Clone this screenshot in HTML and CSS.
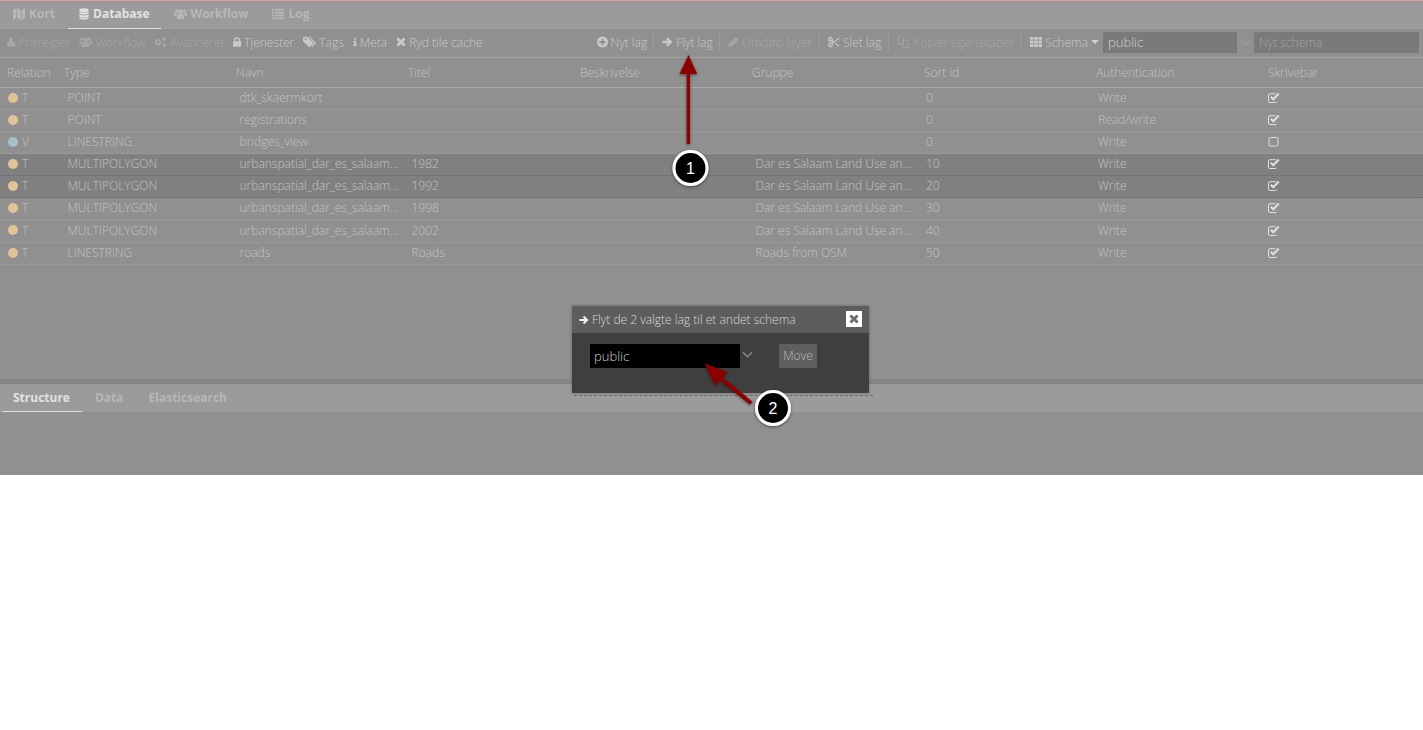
FILE: index.html
```html
<!DOCTYPE html>
<html lang="en">
<head>
  <meta charset="UTF-8" />
  <meta name="viewport" content="width=device-width, initial-scale=1.0"/>
  <title>Database</title>
  <link rel="stylesheet" href="styles.css">
</head>
<body>
  <svg class="sprite" width="0" height="0">
    <symbol id="i-map" viewBox="0 0 12 12" preserveAspectRatio="none"><path d="M0 2.200 3.300 0v9.800L0 12zM4.200 0l3.600 2.200V12L4.200 9.800zM8.700 2.200 12 0v9.800L8.700 12z"/></symbol>
    <symbol id="i-db" viewBox="0 0 14 16"><ellipse cx="7" cy="2.700" rx="6.500" ry="2.700"/><path d="M.5 4.500C2 6.700 12 6.700 13.500 4.500V7C12 9.300 2 9.300 .5 7zM.5 8.500C2 10.700 12 10.700 13.500 8.500V11C12 13.300 2 13.300 .5 11zM.5 12.300C2 14.300 12 14.300 13.500 12.300V13.500C12 16.500 2 16.500 .5 13.500z"/></symbol>
    <symbol id="i-users" viewBox="0 0 18 14"><circle cx="9" cy="4" r="3.400"/><circle cx="3.500" cy="3" r="2.300"/><circle cx="14.500" cy="3" r="2.300"/><path d="M4 13V10c0-2 1.500-3 2.500-3h5c1 0 2.500 1 2.500 3v3c0 .6-.5 1-1 1H5c-.5 0-1-.4-1-1zM0 9V7.500C0 6 1 5.500 2 5.500h2.500C3.500 6.500 3 8 3 10H1c-.5 0-1-.4-1-1zM18 9V7.500c0-1.500-1-2-2-2h-2.500c1 1 1.500 2.500 1.500 4.500h2c.5 0 1-.4 1-1z"/></symbol>
    <symbol id="i-list" viewBox="0 0 14 12"><path d="M0 0h2.500v2H0zM3.500 0H14v2H3.500zM0 3.300h2.500v2H0zM3.500 3.300H14v2H3.500zM0 6.600h2.500v2H0zM3.500 6.600H14v2H3.500zM0 10h2.500v2H0zM3.500 10H14v2H3.500z"/></symbol>
    <symbol id="i-user" viewBox="0 0 10 12"><circle cx="5" cy="3" r="2.900"/><path d="M0 10V8c0-1.500 1-2.500 2-2.500h6c1 0 2 1 2 2.500v2c0 1.200-.8 2-2 2H2c-1.200 0-2-.8-2-2z"/></symbol>
    <symbol id="i-cogs" viewBox="0 0 16 14"><path fill-rule="evenodd" d="M5 3l1 1.200 1.500-.2.500 1.500 1.200.8-.6 1.400.6 1.400-1.200.8-.5 1.500-1.500-.2L5 11.400 4 10.200l-1.500.2-.5-1.500L.8 8.100l.6-1.400L.8 5.300 2 4.500l.5-1.500 1.500.2zM5 5.500a1.700 1.700 0 1 0 .01 0z"/><circle cx="12.500" cy="3" r="2.500"/><circle cx="12.500" cy="11" r="2.500"/></symbol>
    <symbol id="i-lock" viewBox="0 0 10 12"><path fill-rule="evenodd" d="M1 5V3.500a4 3.500 0 0 1 8 0V5h.2c.5 0 .8.300.8.800v5.400c0 .5-.3.800-.8.800H.8c-.5 0-.8-.3-.8-.8V5.800C0 5.300.3 5 .8 5zM2.800 5h4.400V3.500a2.200 2 0 0 0-4.400 0z"/></symbol>
    <symbol id="i-tags" viewBox="0 0 15 12"><path fill-rule="evenodd" d="M0 1c0-.6.400-1 1-1h4l6.500 6.500c.4.400.4 1 0 1.400L8 11.500c-.4.400-1 .4-1.400 0L0 5zM2.800 1.800a1 1 0 1 0 .01 0z"/><path d="M6.500 0h1.500l6.500 6.500c.4.400.4 1 0 1.400L11 11.500c-.4.400-1 .4-1.300 0L13 7.200z"/></symbol>
    <symbol id="i-info" viewBox="0 0 6 12"><path d="M1.500 0h3v2.500h-3zM0 4h4.500v6H6v2H0v-2h1.500V6H0z"/></symbol>
    <symbol id="i-x" viewBox="0 0 12 12"><path d="M3 .5 6 3.500 9 .5 11.500 3 8.500 6l3 3L9 11.500l-3-3-3 3L.5 9l3-3-3-3z"/></symbol>
    <symbol id="i-plus" viewBox="0 0 12 12"><path fill-rule="evenodd" d="M6 0a6 6 0 1 1-.01 0zM5 2.500V5H2.500v2H5v2.500h2V7h2.500V5H7V2.500z"/></symbol>
    <symbol id="i-right" viewBox="0 0 12 12"><path d="M6.300.8 11.500 6l-5.200 5.200-1.800-1.800 2.200-2.100H.5V4.700h6.200L4.500 2.600z"/></symbol>
    <symbol id="i-pencil" viewBox="0 0 12 12"><path d="M8.500.5 11.500 3.500 4 11 0 12l1-4z"/></symbol>
    <symbol id="i-cut" viewBox="0 0 14 12"><path fill-rule="evenodd" d="M2.800 0a2.800 2.800 0 0 1 2.500 4L7 5l5-3.800h2L5.300 8A2.800 2.800 0 1 1 4.400 7L5.400 6 4.400 5A2.800 2.800 0 1 1 2.800 0zM2.800 1.500a1.300 1.300 0 1 0 .01 0zM2.800 8a1.300 1.300 0 1 0 .01 0zM9 7.200l5 3.600h-2L7.800 8z"/></symbol>
    <symbol id="i-copy" viewBox="0 0 14 14"><path fill="none" stroke="currentColor" d="M1 1.500h4l2 2v6H1zM6 4.500h4l3 3v6H6z"/></symbol>
    <symbol id="i-grid" viewBox="0 0 13 11"><path d="M0 0h3.700v3H0zM4.600 0h3.800v3H4.600zM9.300 0H13v3H9.300zM0 4h3.700v3H0zM4.600 4h3.800v3H4.600zM9.300 4H13v3H9.300zM0 8h3.700v3H0zM4.600 8h3.800v3H4.600zM9.300 8H13v3H9.300z"/></symbol>
    <symbol id="i-check" viewBox="0 0 12 11"><path fill="none" stroke="currentColor" d="M8.500 9.500v.2a.8.8 0 0 1-.8.8H1.800a1.300 1.300 0 0 1-1.300-1.300V3a1.300 1.300 0 0 1 1.300-1.300h6"/><path fill="none" stroke="currentColor" stroke-width="2" d="M2.800 4.800 5.300 7.300 10.800 1.500"/></symbol>
    <symbol id="i-box" viewBox="0 0 11 11"><rect x=".5" y="1.500" width="9" height="8.500" rx="1.500" fill="none" stroke="currentColor"/></symbol>
  </svg>

  <div class="app">
    <nav class="tabs main-tabs">
      <a class="tab"><svg class="ico w12"><use href="#i-map"/></svg>Kort</a>
      <a class="tab active"><svg class="ico w10"><use href="#i-db"/></svg>Database</a>
      <a class="tab"><svg class="ico w13"><use href="#i-users"/></svg>Workflow</a>
      <a class="tab"><svg class="ico w12"><use href="#i-list"/></svg>Log</a>
    </nav>

    <div class="toolbar">
      <span class="tool off"><svg class="ico w8"><use href="#i-user"/></svg>Privilegier</span>
      <span class="tool off"><svg class="ico w13"><use href="#i-users"/></svg>Workflow</span>
      <span class="tool off"><svg class="ico w13"><use href="#i-cogs"/></svg>Avanceret</span>
      <span class="tool"><svg class="ico w8"><use href="#i-lock"/></svg>Tjenester</span>
      <span class="tool"><svg class="ico w13"><use href="#i-tags"/></svg>Tags</span>
      <span class="tool"><svg class="ico w4"><use href="#i-info"/></svg>Meta</span>
      <span class="tool"><svg class="ico w10"><use href="#i-x"/></svg>Ryd tile cache</span>

      <div class="tool-right">
        <span class="tool sep"><svg class="ico w11"><use href="#i-plus"/></svg>Nyt lag</span>
        <span class="tool sep"><svg class="ico w11"><use href="#i-right"/></svg>Flyt lag</span>
        <span class="tool sep off roomy"><svg class="ico w11"><use href="#i-pencil"/></svg>Omdøb layer</span>
        <span class="tool sep roomy"><svg class="ico w12"><use href="#i-cut"/></svg>Slet lag</span>
        <span class="tool sep off"><svg class="ico w13"><use href="#i-copy"/></svg>Kopier egenskaber</span>
        <span class="tool schema"><svg class="ico w12"><use href="#i-grid"/></svg>Schema<i class="caret"></i></span>
        <span class="field schema-field">public</span>
        <svg class="chev" viewBox="0 0 12 7"><path d="M1 1l5 5 5-5" fill="none" stroke="currentColor"/></svg>
        <span class="field new-schema">Nyt schema</span>
      </div>
    </div>

    <div class="grid">
      <div class="row head">
        <span>Relation</span><span>Type</span><span>Navn</span><span>Titel</span><span>Beskrivelse</span><span>Gruppe</span><span>Sort id</span><span>Authentication</span><span>Skrivebar</span>
      </div>
      <div class="row">
        <span class="rel"><i class="dot"></i>T</span><span>POINT</span><span>dtk_skaermkort</span><span></span><span></span><span></span><span>0</span><span>Write</span><span><svg class="chk"><use href="#i-check"/></svg></span>
      </div>
      <div class="row">
        <span class="rel"><i class="dot"></i>T</span><span>POINT</span><span>registrations</span><span></span><span></span><span></span><span>0</span><span>Read/write</span><span><svg class="chk"><use href="#i-check"/></svg></span>
      </div>
      <div class="row">
        <span class="rel"><i class="dot view"></i>V</span><span>LINESTRING</span><span>bridges_view</span><span></span><span></span><span></span><span>0</span><span>Write</span><span><svg class="chk"><use href="#i-box"/></svg></span>
      </div>
      <div class="row selected">
        <span class="rel"><i class="dot"></i>T</span><span>MULTIPOLYGON</span><span>urbanspatial_dar_es_salaam...</span><span>1982</span><span></span><span>Dar es Salaam Land Use an...</span><span>10</span><span>Write</span><span><svg class="chk"><use href="#i-check"/></svg></span>
      </div>
      <div class="row selected">
        <span class="rel"><i class="dot"></i>T</span><span>MULTIPOLYGON</span><span>urbanspatial_dar_es_salaam...</span><span>1992</span><span></span><span>Dar es Salaam Land Use an...</span><span>20</span><span>Write</span><span><svg class="chk"><use href="#i-check"/></svg></span>
      </div>
      <div class="row">
        <span class="rel"><i class="dot"></i>T</span><span>MULTIPOLYGON</span><span>urbanspatial_dar_es_salaam...</span><span>1998</span><span></span><span>Dar es Salaam Land Use an...</span><span>30</span><span>Write</span><span><svg class="chk"><use href="#i-check"/></svg></span>
      </div>
      <div class="row tall">
        <span class="rel"><i class="dot"></i>T</span><span>MULTIPOLYGON</span><span>urbanspatial_dar_es_salaam...</span><span>2002</span><span></span><span>Dar es Salaam Land Use an...</span><span>40</span><span>Write</span><span><svg class="chk"><use href="#i-check"/></svg></span>
      </div>
      <div class="row">
        <span class="rel"><i class="dot"></i>T</span><span>LINESTRING</span><span>roads</span><span>Roads</span><span></span><span>Roads from OSM</span><span>50</span><span>Write</span><span><svg class="chk"><use href="#i-check"/></svg></span>
      </div>
    </div>

    <div class="splitter"></div>

    <nav class="tabs sub-tabs">
      <a class="tab active">Structure</a>
      <a class="tab">Data</a>
      <a class="tab">Elasticsearch</a>
    </nav>
    <div class="detail"></div>
  </div>

  <div class="dash"></div>
  <div class="modal">
    <div class="modal-title">
      <svg class="ico w10"><use href="#i-right"/></svg>Flyt de 2 valgte lag til et andet schema
      <span class="modal-close"><svg><use href="#i-x"/></svg></span>
    </div>
    <div class="modal-body">
      <span class="modal-select">public</span>
      <svg class="chev" viewBox="0 0 12 7"><path d="M1 1l5 5 5-5" fill="none" stroke="currentColor" stroke-width="1.500"/></svg>
      <span class="modal-btn">Move</span>
    </div>
  </div>

  <!-- callout arrows and numbered markers -->
  <svg class="callouts" width="1423" height="475" viewBox="0 0 1423 475">
    <defs>
      <filter id="shadow" x="-30%" y="-30%" width="160%" height="160%">
        <feDropShadow dx="0" dy="1" stdDeviation="1.500" flood-color="#000" flood-opacity=".5"/>
      </filter>
    </defs>
    <g filter="url(#shadow)" fill="#8c0000" stroke="none">
      <path d="M686.700 144V74h-7.200L688.500 55l8.700 19h-7.200v70z"/>
      <path d="M749.500 404.500 719.500 380l-4.500 5.500L704.500 363.500l22.800 8.500-4.500 5.500 30 24.500z"/>
    </g>
    <g filter="url(#shadow)">
      <circle cx="690.500" cy="168" r="16.500" fill="#000" stroke="#fff" stroke-width="3"/>
      <circle cx="773" cy="408" r="16.500" fill="#000" stroke="#fff" stroke-width="3"/>
    </g>
    <text class="num" x="690.500" y="174">1</text>
    <text class="num" x="773" y="414">2</text>
  </svg>
</body>
</html>
```

FILE: styles.css
```css
* {
  box-sizing: border-box;
}
html, body {
  margin: 0;
  background: #fff;
}
body {
  position: relative;
  height: 730px;
  overflow: hidden;
  font-family: "Open Sans", sans-serif;
  font-size: 12px;
  font-weight: 300;
  color: #c8c8c8;
}
.sprite {
  position: absolute;
}
.app {
  display: flex;
  flex-direction: column;
  height: 475px;
  background: #909090;
  border-top: 1px solid #dc9ca0;
}
.ico {
  height: 12px;
  margin-right: 3px;
  fill: currentColor;
  flex: none;
}
.w4 { width: 4px; }
.w8 { width: 8px; }
.w10 { width: 10px; }
.w11 { width: 11px; }
.w12 { width: 12px; }
.w13 { width: 13px; }

/* tabs */
.tabs {
  display: flex;
  background: #9b9b9b;
}
.main-tabs {
  height: 28px;
  padding-left: 2px;
}
.sub-tabs {
  height: 28px;
}
.tab {
  display: flex;
  align-items: center;
  padding: 0 11px 2px;
  font-size: 12px;
  font-weight: 700;
  color: #b7b7b7;
  border-bottom: 1px solid transparent;
}
.main-tabs .tab {
  margin-right: 2px;
}
.main-tabs .ico {
  margin-right: 4px;
}
.tab.active {
  color: #e2e2e2;
  border-bottom-color: #e2e2e2;
}
.sub-tabs .tab {
  margin-left: 2px;
  padding: 0 12px 0 11px;
}

/* toolbar */
.toolbar {
  display: flex;
  align-items: center;
  height: 29px;
  padding: 0 4px 2px 7px;
  border-bottom: 1px solid #a3a3a3;
}
.tool {
  display: flex;
  align-items: center;
  margin-right: 9px;
  white-space: nowrap;
  color: #c9c9c9;
}
.tool.off {
  color: #a6a6a6;
}
.tool-right {
  display: flex;
  align-items: center;
  margin-left: auto;
}
.tool.sep {
  height: 18px;
  margin-right: 0;
  padding: 0 6px 0 8px;
  border-right: 1px solid #9d9d9d;
}
.tool.sep.roomy {
  padding-right: 7px;
}
.tool.schema {
  margin: 0 0 0 9px;
}
.caret {
  width: 0;
  height: 0;
  margin: 0 4px 0 3px;
  border: 4px solid transparent;
  border-top: 4px solid #cfcfcf;
  border-bottom: 0;
}
.field {
  height: 21px;
  line-height: 21px;
  padding-left: 5px;
  background: #7a7a7a;
}
.schema-field {
  width: 134px;
  color: #d2d2d2;
  font-size: 13px;
}
.new-schema {
  width: 165px;
  color: #a3a3a3;
}
.chev {
  width: 11px;
  height: 7px;
  margin: 0 3px 0 3px;
  color: #a9a9a9;
}

/* table */
.row {
  display: grid;
  grid-template-columns: 57px repeat(7, 172px) 1fr;
  align-items: center;
  height: 22px;
  padding: 0 0 2px 7px;
  border-bottom: 1px solid #9a9a9a;
  color: #c2c2c2;
}
.row span {
  padding-left: 3.5px;
  white-space: nowrap;
  overflow: hidden;
}
.row span:nth-child(7),
.row span:nth-child(8) {
  padding-left: 2px;
}
.row span:nth-child(9) {
  padding-left: 0;
}
.row .rel {
  display: flex;
  align-items: center;
  padding-left: 1px;
}
.row.head {
  height: 30px;
  padding-bottom: 0;
  border-bottom: 1px solid #a8a8a8;
  color: #c4c4c4;
}
.row.head span {
  padding-left: 0;
}
.row.tall {
  height: 23px;
}
.row.selected {
  background: #808080;
  border-bottom: 1px dotted #6a6a6a;
}
.dot {
  width: 10px;
  height: 10px;
  margin-right: 4px;
  border-radius: 50%;
  background: #e0c498;
}
.dot.view {
  background: #a9c0cc;
}
.chk {
  display: block;
  width: 12px;
  height: 11px;
  color: #e0e0e0;
}

/* bottom */
.grid {
  flex: 1;
}
.splitter {
  height: 5px;
  background: #858585;
}
.detail {
  height: 63px;
  background: #909090;
}

/* modal */
.dash {
  position: absolute;
  left: 574px;
  top: 395px;
  width: 299px;
  border-top: 1px dashed #6e6e6e;
}
.modal {
  position: absolute;
  left: 572px;
  top: 306px;
  width: 297px;
  height: 87px;
  background: #3f3f3f;
  box-shadow: 0 0 3px rgba(0,0,0,0.3);
}
.modal-title {
  display: flex;
  align-items: center;
  height: 27px;
  padding-left: 7px;
  background: #5d5d5d;
  color: #d8d8d8;
}
.modal-title .ico {
  color: #f0f0f0;
}
.modal-close {
  position: absolute;
  right: 7px;
  top: 5px;
  width: 16px;
  height: 16px;
  padding: 3px;
  background: #fff;
}
.modal-close svg {
  display: block;
  width: 10px;
  height: 10px;
  fill: #6e6e6e;
}
.modal-body {
  display: flex;
  align-items: flex-start;
  padding: 11px 0 0 18px;
}
.modal-select {
  width: 150px;
  height: 24px;
  line-height: 24px;
  padding-left: 4px;
  background: #000;
  color: #d4d4d4;
  font-size: 13px;
}
.modal-body .chev {
  margin: 7px 0 0 2px;
  color: #8a8a8a;
}
.modal-btn {
  width: 38px;
  height: 24px;
  margin-left: 26px;
  line-height: 24px;
  text-align: center;
  background: #5f5f5f;
  color: #bdbdbd;
}

/* callouts */
.callouts {
  position: absolute;
  left: 0;
  top: 0;
}
.num {
  font-family: "Liberation Sans", sans-serif;
  font-size: 16px;
  fill: #fff;
  text-anchor: middle;
}
```
